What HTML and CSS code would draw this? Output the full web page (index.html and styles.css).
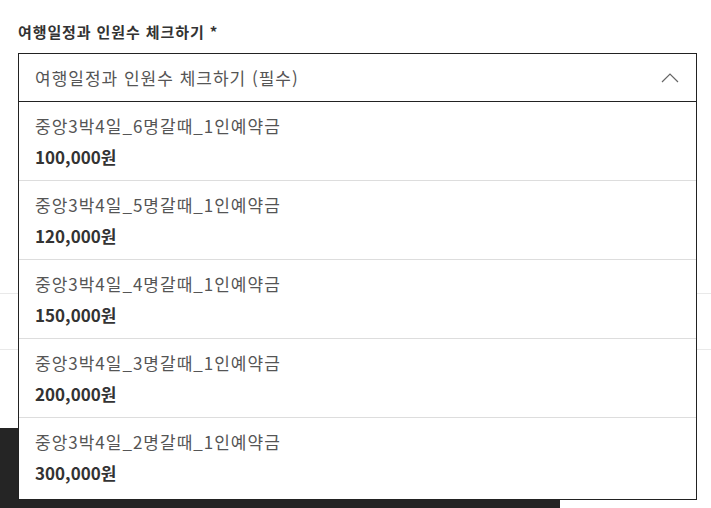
FILE: index.html
```html
<!DOCTYPE html>
<html lang="ko">
  <head>
    <meta charset="utf-8">
    <title>여행일정 선택</title>
    <link rel="stylesheet" href="styles.css">
  </head>
  <body>

  <div class="field">
    <div class="field-label">여행일정과 인원수 체크하기 *</div>
    <div class="select open">
      <div class="select-value">
        <span>여행일정과 인원수 체크하기 (필수)</span>
        <svg class="chevron" width="18" height="10" viewBox="0 0 18 10">
          <path d="M1 9 L9 1 L17 9" fill="none" stroke="#666" stroke-width="1.2"/>
        </svg>
      </div>
      <ul class="options">
        <li class="option">
          <div class="option-name">중앙3박4일_6명갈때_1인예약금</div>
          <div class="option-price">100,000원</div>
        </li>
        <li class="option">
          <div class="option-name">중앙3박4일_5명갈때_1인예약금</div>
          <div class="option-price">120,000원</div>
        </li>
        <li class="option">
          <div class="option-name">중앙3박4일_4명갈때_1인예약금</div>
          <div class="option-price">150,000원</div>
        </li>
        <li class="option">
          <div class="option-name">중앙3박4일_3명갈때_1인예약금</div>
          <div class="option-price">200,000원</div>
        </li>
        <li class="option">
          <div class="option-name">중앙3박4일_2명갈때_1인예약금</div>
          <div class="option-price">300,000원</div>
        </li>
      </ul>
    </div>
  </div>

  <div class="rows">
    <div class="row"></div>
    <div class="row row-tall"></div>
  </div>

  <div class="buy-bar"></div>

  </body>
</html>
```

FILE: styles.css
```css
html {
  height: 100%;
}
body {
  margin: 0;
  padding: 0;
  background: #fff;
  color: #333;
  font-family: "Noto Sans CJK KR", "Noto Sans", sans-serif;
  font-size: 16px;
  height: 100%;
  overflow: hidden;
}

.field {
  padding: 22px 14px 0 18px;
}

.field-label {
  font-size: 15px;
  font-weight: bold;
  line-height: 20px;
  letter-spacing: 0.9px;
  color: #333;
  margin-bottom: 11px;
}

.select {
  position: relative;
}

.select-value {
  height: 49px;
  box-sizing: border-box;
  border: 1px solid #222;
  padding: 0 16px 0 16px;
  display: flex;
  align-items: center;
  justify-content: space-between;
  font-size: 17px;
  letter-spacing: 1px;
  color: #555;
  background: #fff;
}

.chevron {
  display: block;
  margin-right: 1px;
}

.options {
  position: absolute;
  top: 100%;
  left: 0;
  right: 0;
  margin: 0;
  padding: 0;
  list-style: none;
  background: #fff;
  border: 1px solid #222;
  border-top: none;
  z-index: 2;
}

.option {
  padding: 10px 16px 9px;
  border-bottom: 1px solid #ddd;
}
.option:last-child {
  border-bottom: none;
  padding-bottom: 12px;
}

.option-name {
  font-size: 17px;
  line-height: 28px;
  letter-spacing: 1px;
  color: #555;
}

.option-price {
  font-size: 17px;
  font-weight: bold;
  line-height: 28px;
  margin-top: 3px;
  color: #333;
}

.rows {
  margin-top: 191px;
}
.row {
  height: 55px;
  border-top: 1px solid #e9e9e9;
}
.row-tall {
  height: 78px;
}

.buy-bar {
  width: 560px;
  height: 80px;
  background: #252525;
}
```
